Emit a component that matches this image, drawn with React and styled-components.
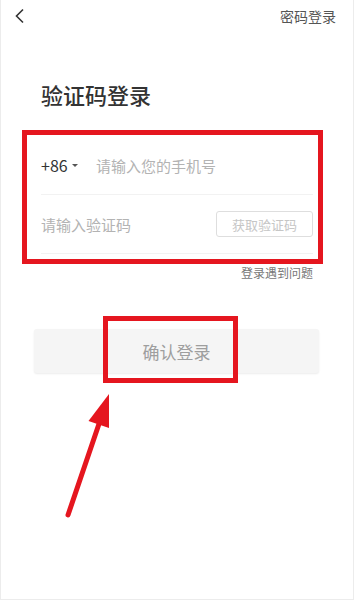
import styled, { createGlobalStyle } from "styled-components";

const GlobalStyle = createGlobalStyle`
  body {
    margin: 0;
    background: #fff;
    font-family: "Noto Sans CJK SC", "Noto Sans", sans-serif;
  }
`;

const Page = styled.div`
  position: relative;
  width: 354px;
  height: 600px;
  box-sizing: border-box;
  border: 1px solid #ececec;
  border-top: none;
  overflow: hidden;
`;

const TopBar = styled.div`
  display: flex;
  align-items: center;
  justify-content: space-between;
  height: 32px;
  padding: 0 17px 0 13px;
`;

const BackButton = styled.button`
  display: flex;
  padding: 0;
  border: none;
  background: none;
  cursor: pointer;
`;

const SwitchLink = styled.span`
  font-size: 14px;
  color: #555;
`;

const Title = styled.h1`
  margin: 47px 0 0 40px;
  font-size: 22px;
  line-height: 30px;
  font-weight: 500;
  color: #333;
`;

const Form = styled.div`
  position: relative;
  margin: 27px 40px 0;
`;

const Row = styled.div`
  display: flex;
  align-items: center;
  height: 58px;
  border-bottom: 1px solid #f2f2f2;
`;

const Prefix = styled.span`
  display: flex;
  align-items: center;
  gap: 4px;
  width: 55px;
  font-size: 16px;
  color: #333;
  &::after {
    content: "";
    border-left: 3px solid transparent;
    border-right: 3px solid transparent;
    border-top: 3px solid #555;
  }
`;

const Field = styled.input`
  flex: 1;
  min-width: 0;
  border: none;
  outline: none;
  padding: 0;
  font-family: inherit;
  font-size: 15px;
  color: #333;
  &::placeholder {
    color: #b3b3b3;
  }
`;

const CodeButton = styled.button`
  width: 97px;
  height: 26px;
  border: 1px solid #dedede;
  border-radius: 3px;
  background: #fff;
  font-family: inherit;
  font-size: 13px;
  color: #c6c6c6;
  padding: 0;
`;

const Highlight = styled.div`
  position: absolute;
  border: 5px solid #e5161f;
  pointer-events: none;
`;

const HelpLink = styled.div`
  margin: 10px 40px 0;
  text-align: right;
  font-size: 12px;
  color: #777;
`;

const Submit = styled.div`
  position: relative;
  display: flex;
  align-items: center;
  justify-content: center;
  height: 44px;
  margin: 48px 34px 0 33px;
  background: #f5f5f5;
  border-radius: 3px;
  box-shadow: 0 1px 2px rgba(0, 0, 0, 0.08);
  font-size: 17px;
  color: #9e9e9e;
`;

const Arrow = styled.svg`
  position: absolute;
  left: 0;
  top: 0;
  pointer-events: none;
`;

export default function App() {
  return (
    <Page>
      <GlobalStyle />
      <TopBar>
        <BackButton aria-label="back">
          <svg width="12" height="16" viewBox="0 0 12 16">
            <path d="M9 1.5 L2.5 8 L9 14.5" fill="none" stroke="#333" strokeWidth="1.6" />
          </svg>
        </BackButton>
        <SwitchLink>密码登录</SwitchLink>
      </TopBar>
      <Title>验证码登录</Title>
      <Form>
        <Row>
          <Prefix>+86</Prefix>
          <Field placeholder="请输入您的手机号" />
        </Row>
        <Row>
          <Field placeholder="请输入验证码" />
          <CodeButton>获取验证码</CodeButton>
        </Row>
        <Highlight style={{ left: -19, top: -6, right: -10, bottom: -10 }} />
      </Form>
      <HelpLink>登录遇到问题</HelpLink>
      <Submit>
        确认登录
        <Highlight style={{ left: 69, top: -13, width: 125, height: 57 }} />
      </Submit>
      <Arrow width="354" height="600" viewBox="0 0 354 600">
        <line x1="67" y1="515" x2="100" y2="418" stroke="#e5161f" strokeWidth="5" strokeLinecap="round" />
        <polygon points="108,394 87.5,421 108,428" fill="#e5161f" />
      </Arrow>
    </Page>
  );
}
